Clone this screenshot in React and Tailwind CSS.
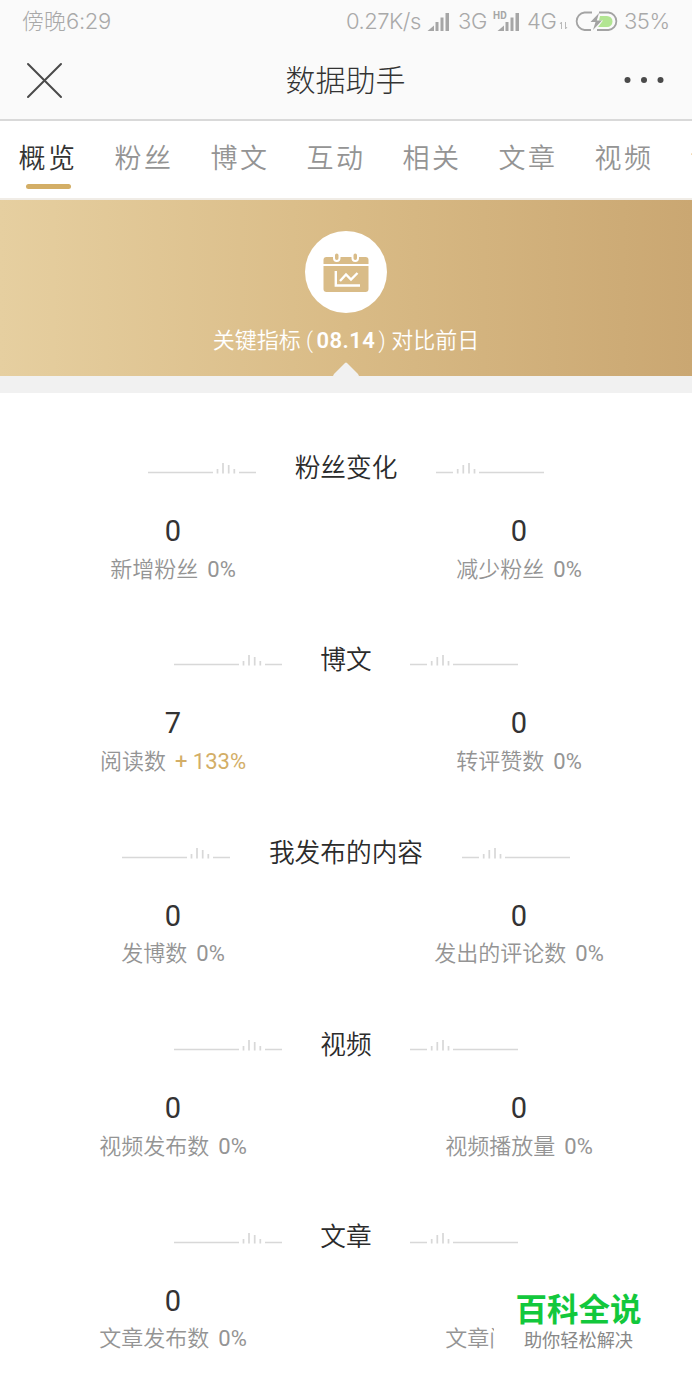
import React, { useState } from 'react';

const tabs = ['概览', '粉丝', '博文', '互动', '相关', '文章', '视频', '话题'];

const sections = [
  {
    title: '粉丝变化',
    stats: [
      { label: '新增粉丝', value: 0, change: '0%' },
      { label: '减少粉丝', value: 0, change: '0%' },
    ],
  },
  {
    title: '博文',
    stats: [
      { label: '阅读数', value: 7, change: '+ 133%', up: true },
      { label: '转评赞数', value: 0, change: '0%' },
    ],
  },
  {
    title: '我发布的内容',
    stats: [
      { label: '发博数', value: 0, change: '0%' },
      { label: '发出的评论数', value: 0, change: '0%' },
    ],
  },
  {
    title: '视频',
    stats: [
      { label: '视频发布数', value: 0, change: '0%' },
      { label: '视频播放量', value: 0, change: '0%' },
    ],
  },
  {
    title: '文章',
    stats: [
      { label: '文章发布数', value: 0, change: '0%' },
      { label: '文章阅读数', value: 0, change: '0%' },
    ],
  },
];

const Signal = ({ hd }) => (
  <svg width="28" height="24" viewBox="-6 0 28 24" fill="#a6a6a6" className="shrink-0">
    <path d="M-0.5 22 L6 16.5 V22 Z" />
    <rect x="7.5" y="13" width="3" height="9" />
    <rect x="12.5" y="8.5" width="3" height="13.5" />
    <rect x="17.5" y="4" width="3.5" height="18" />
    {hd && (
      <text x="-5" y="9.5" fontSize="10" fontWeight="700" fontFamily="Roboto, sans-serif" letterSpacing="0.3">
        HD
      </text>
    )}
  </svg>
);

const Battery = () => (
  <svg width="46" height="24" viewBox="0 0 46 24" fill="none" className="shrink-0">
    <path d="M26 7 H33 A5.5 5.5 0 0 1 33 18 H24 L29 11.5 H25 Z" fill="#b2e592" />
    <path d="M18 3.5 H10.5 A8.8 8.8 0 0 0 10.5 21 H17" stroke="#a3a3a3" strokeWidth="1.8" />
    <path d="M25 3.5 H34.5 A8.8 8.8 0 0 1 34.5 21 H23" stroke="#a3a3a3" strokeWidth="1.8" />
    <path d="M25 4 L16.5 13 H21.5 L19 21 L28 11.5 H22.8 Z" fill="#a3a3a3" />
  </svg>
);

const StatusBar = () => (
  <div className="flex h-10 items-center justify-between pl-[22px] pt-0.5 font-[Inter,'Noto_Sans_CJK_SC',sans-serif] text-[22px] font-light tracking-[-0.3px] text-[#a9a9a9]">
    <span>
      <span className="tracking-normal">傍晚</span>6:29
    </span>
    <div className="flex w-[346px] items-center whitespace-nowrap">
      <span className="w-[76px] tracking-[-0.5px]">0.27K/s</span>
      <Signal />
      <span className="ml-[8px] w-[34px]">3G</span>
      <Signal hd />
      <span className="ml-[7px] w-[32px]">4G</span>
      <svg width="9" height="20" viewBox="0 0 9 20" fill="none" stroke="#b9b9b9" strokeWidth="1">
        <path d="M2.5 18 V11 L1 13 M6.5 11 V18 L8 16" />
      </svg>
      <span className="ml-[6px] w-[50px]">
        <Battery />
      </span>
      <span className="tracking-[-0.5px]">35%</span>
    </div>
  </div>
);

const NavBar = () => (
  <div className="flex h-[81px] items-center justify-between border-b-2 border-[#d9d9d9] px-[26px] pt-px">
    <svg width="38" height="38" viewBox="0 0 38 38" stroke="#4a4a4a" strokeWidth="2" strokeLinecap="round">
      <path d="M2 3 L35 36 M35 3 L2 36" />
    </svg>
    <h1 className="ml-[3px] text-[30px] font-light text-[#333]">数据助手</h1>
    <svg width="42" height="8" viewBox="0 0 42 8" fill="#4a4a4a">
      <circle cx="3.5" cy="4" r="3" />
      <circle cx="20" cy="4" r="3" />
      <circle cx="36.5" cy="4" r="3" />
    </svg>
  </div>
);

const Banner = () => (
  <div className="relative flex h-[176px] flex-col items-center bg-linear-to-r from-[#e6cfa0] via-[#d9bb86] to-[#caa772]">
    <div className="mt-[31px] flex h-[82px] w-[82px] items-center justify-center rounded-full bg-white">
      <svg width="46" height="42" viewBox="0 0 46 42" fill="none">
        <rect x="0.5" y="6" width="45" height="35" rx="3" fill="#d9bc88" />
        <path d="M0 14 H46" stroke="#fff" strokeWidth="2" />
        <rect x="11" y="1.5" width="5.5" height="8.5" rx="2.7" fill="#d9bc88" stroke="#fff" strokeWidth="2" />
        <rect x="29.5" y="1.5" width="5.5" height="8.5" rx="2.7" fill="#d9bc88" stroke="#fff" strokeWidth="2" />
        <path d="M12.8 20 V34.5 H37" stroke="#fff" strokeWidth="2.4" />
        <path d="M17 30 L23 23.5 L28 28.5 L34.5 22" stroke="#fff" strokeWidth="2.4" />
      </svg>
    </div>
    <p className="mt-3 flex h-[30px] items-center text-[22px] text-white">
      <span className="font-[350]">关键指标</span>
      <span className="mx-[5px] flex items-center tracking-[0.5px]">
        <span className="mr-[3px] font-light">(</span>
        <span className="font-semibold">08.14</span>
        <span className="ml-[3px] font-light">)</span>
      </span>
      <span className="font-[350]">对比前日</span>
    </p>
    <svg className="absolute bottom-0 left-[333px]" width="26" height="14" viewBox="0 0 26 14" fill="#f1f1f1">
      <path d="M0 14 L1 12 L12 1 Q13 0 14 1 L25 12 L26 14 Z" />
    </svg>
  </div>
);

const Divider = ({ flip }) => (
  <svg
    width="108"
    height="12"
    viewBox="0 0 108 12"
    stroke="#d8d8d8"
    strokeWidth="1.7"
    className={flip ? 'mt-0.5 -scale-x-100' : 'mt-0.5'}
  >
    <path d="M0 9.5 H65 M91 9.5 H108" />
    <path d="M69.5 6 V10.5 M75 0 V10.5 M80.7 2 V10.5 M86.3 6 V10.5" />
  </svg>
);

const Section = ({ title, stats }) => (
  <section className="h-[192.4px]">
    <div className="flex h-9 items-center justify-center gap-[38.5px]">
      <Divider />
      <h2 className="text-[25.7px] font-[350] text-[#2b2b2b]">{title}</h2>
      <Divider flip />
    </div>
    <div className="mt-[28px] grid grid-cols-2 text-center">
      {stats.map((s) => (
        <div key={s.label}>
          <div className="h-[34px] text-[29px] leading-[34px] text-[#333]">{s.value}</div>
          <div className="mt-1.5 flex h-[30px] items-center justify-center gap-[9px] text-[22px] text-[#949494]">
            <span className="font-[350]">{s.label}</span>
            <span className={s.up ? 'text-[#d3ae66]' : ''}>{s.change}</span>
          </div>
        </div>
      ))}
    </div>
  </section>
);

const App = () => {
  const [active, setActive] = useState('概览');

  return (
    <div
      lang="zh-CN"
      className="relative h-[1384px] w-[692px] overflow-hidden bg-white font-[Roboto,'Noto_Sans_CJK_SC',sans-serif]"
    >
      <header className="bg-[#fafafa]">
        <StatusBar />
        <NavBar />
      </header>

      <nav className="flex h-[79px] gap-9 overflow-hidden border-b-2 border-[#f0ece6] pl-[18px]">
        {tabs.map((tab) => (
          <button
            key={tab}
            onClick={() => setActive(tab)}
            className={`flex w-[60px] shrink-0 flex-col items-center pt-[18px] text-[27px] font-[350] leading-10 tracking-[2.5px] ${
              tab === active ? 'text-[#333]' : 'text-[#949494]'
            }`}
          >
            <span className="whitespace-nowrap">{tab}</span>
            {tab === active && <span className="mt-[5px] h-[5px] w-[45px] rounded-sm bg-[#d3ae66]" />}
          </button>
        ))}
      </nav>

      <Banner />
      <div className="h-[17px] bg-[#f1f1f1]" />

      <main className="pt-[57px]">
        {sections.map((section) => (
          <Section key={section.title} {...section} />
        ))}
      </main>

      <div className="absolute left-[494px] top-[1285px] flex h-[76px] w-[175px] flex-col items-center bg-white pr-1.5 pt-1.5">
        <strong className="text-[31.5px] leading-10 text-[#12c83c]">百科全说</strong>
        <span className="text-[18.2px] leading-5 text-[#888]">助你轻松解决</span>
      </div>
    </div>
  );
};

export default App;
